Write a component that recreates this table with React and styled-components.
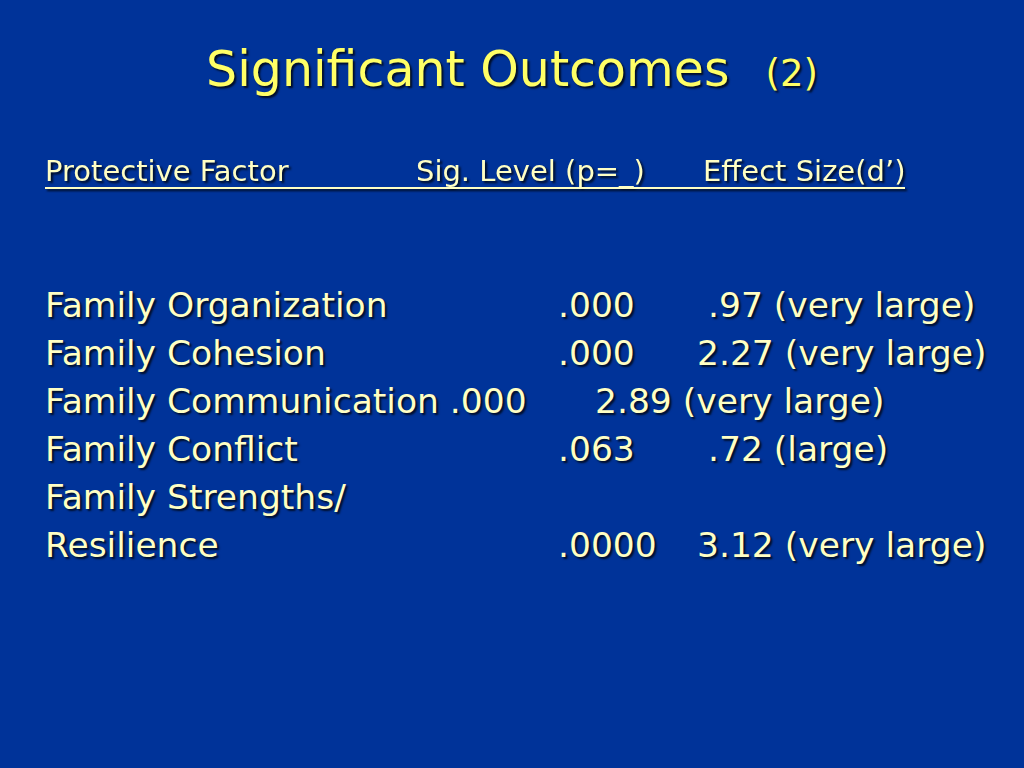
import React from "react";
import styled, { createGlobalStyle } from "styled-components";

const GlobalStyle = createGlobalStyle`
  html, body {
    margin: 0;
    padding: 0;
    background: #003399;
  }
`;

const Slide = styled.div`
  width: 1024px;
  height: 768px;
  background: #003399;
  color: #ffffc4;
  font-family: "DejaVu Sans", "Liberation Sans", sans-serif;
  display: flex;
  flex-direction: column;
  overflow: hidden;
  text-shadow: 2px 2px 2px rgba(0, 0, 0, 0.75);
`;

const Title = styled.h1`
  margin: 0;
  padding-top: 38px;
  text-align: center;
  font-weight: normal;
  font-size: 49px;
  line-height: 64px;
  color: #ffff66;
`;

const TitleSmall = styled.span`
  font-size: 37px;
  margin-left: 36px;
`;

const Body = styled.div`
  padding-left: 45px;
  display: flex;
  flex-direction: column;
`;

const Header = styled.div`
  margin-top: 49px;
  align-self: flex-start;
  display: grid;
  grid-template-columns: 371px 287px auto;
  font-size: 29px;
  line-height: 32px;
  border-bottom: 2px solid #ffffc4;
  text-shadow: none;
  filter: drop-shadow(2px 2px 1px rgba(0, 0, 0, 0.8));
`;

const Table = styled.div`
  margin-top: 92px;
  display: flex;
  flex-direction: column;
  font-size: 34.5px;
  line-height: 48px;
`;

const Row = styled.div`
  display: grid;
  grid-template-columns: ${(p) => p.$cols || "513px 139px auto"};
  white-space: pre;
`;

const Cell = styled.span`
  padding-left: ${(p) => p.$indent || 0}px;
`;

const rows = [
  { name: "Family Organization", sig: ".000", effect: ".97 (very large)", indent: 11 },
  { name: "Family Cohesion", sig: ".000", effect: "2.27 (very large)" },
  { name: "Family Communication .000", effect: "2.89 (very large)", cols: "550px auto" },
  { name: "Family Conflict", sig: ".063", effect: ".72 (large)", indent: 11 },
  { name: "Family Strengths/", sig: "", effect: "" },
  { name: "Resilience", sig: ".0000", effect: "3.12 (very large)" },
];

export default function App() {
  return (
    <>
      <GlobalStyle />
      <Slide>
        <Title>
          Significant Outcomes<TitleSmall>(2)</TitleSmall>
        </Title>
        <Body>
          <Header>
            <span>Protective Factor</span>
            <span>Sig. Level (p=_)</span>
            <span>Effect Size(d’)</span>
          </Header>
          <Table>
            {rows.map((r, i) => (
              <Row key={i} $cols={r.cols}>
                <Cell>{r.name}</Cell>
                {!r.cols && <Cell>{r.sig}</Cell>}
                <Cell $indent={r.indent}>{r.effect}</Cell>
              </Row>
            ))}
          </Table>
        </Body>
      </Slide>
    </>
  );
}
